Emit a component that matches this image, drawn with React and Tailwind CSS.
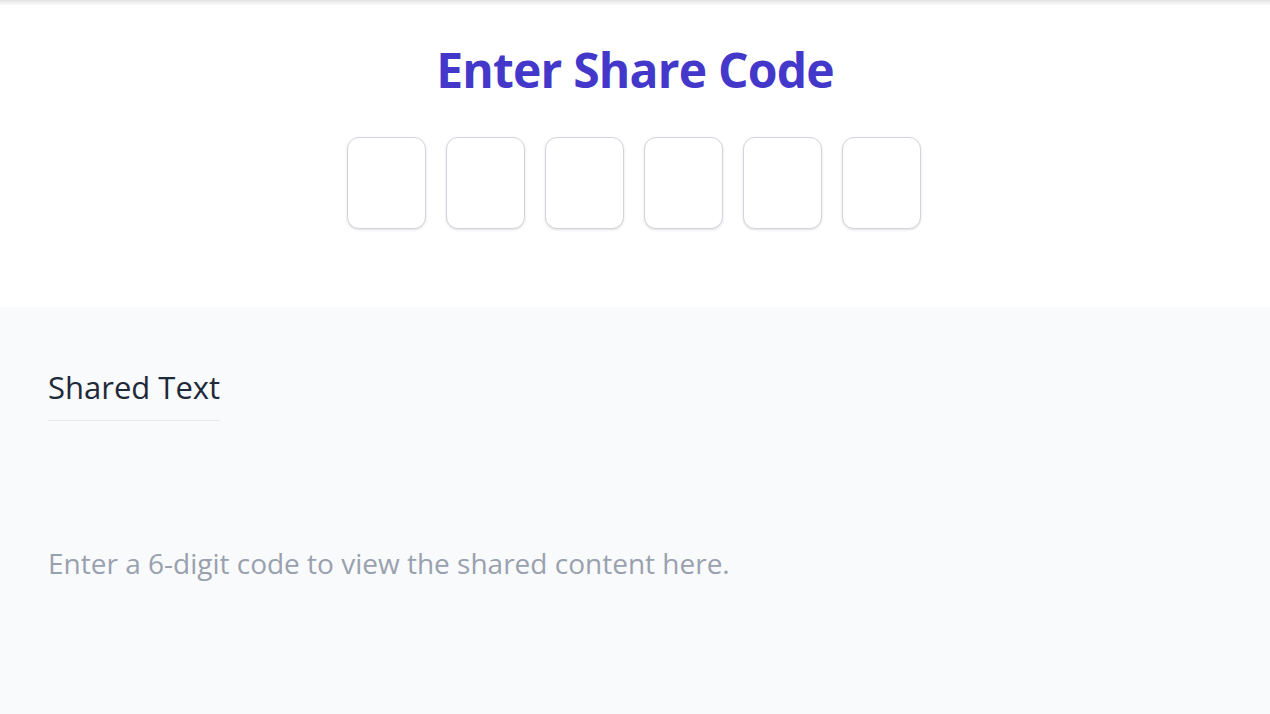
import { useState, useRef } from 'react'

const CodeInputs = () => {
  const [digits, setDigits] = useState(['', '', '', '', '', ''])
  const refs = useRef([])

  const handleChange = (i, v) => {
    const d = v.replace(/\D/g, '').slice(-1)
    const next = [...digits]
    next[i] = d
    setDigits(next)
    if (d && i < 5) refs.current[i + 1]?.focus()
  }

  return (
    <div className="flex justify-center gap-5 mt-[39px] pr-[2px]">
      {digits.map((d, i) => (
        <input
          key={i}
          ref={(el) => (refs.current[i] = el)}
          value={d}
          onChange={(e) => handleChange(i, e.target.value)}
          maxLength={1}
          inputMode="numeric"
          className="w-[79px] h-[92px] rounded-xl border border-gray-300 bg-white shadow-sm text-center text-3xl text-gray-800 outline-none focus:border-indigo-500"
        />
      ))}
    </div>
  )
}

const App = () => {
  return (
    <div className="min-h-[714px] flex flex-col font-['Open_Sans',sans-serif]">
      <div className="bg-white h-[307px] flex flex-col">
        <div className="h-[6px] bg-gradient-to-b from-[#e2e2e2] to-white" />
        <h1 className="text-center text-[48px] leading-[56px] font-bold tracking-[-0.8px] text-[#4338ca] mt-[36px]">Enter Share Code</h1>
        <CodeInputs />
      </div>
      <div className="flex-1 bg-gray-50 px-12 pt-[58px]">
        <h2 className="inline-block text-[31px] leading-[44px] font-medium text-gray-800 border-b border-gray-200 pb-[11px]">Shared Text</h2>
        <p className="text-[28px] leading-[36px] text-gray-400 mt-[124px]">Enter a 6-digit code to view the shared content here.</p>
      </div>
    </div>
  )
}

export default App
